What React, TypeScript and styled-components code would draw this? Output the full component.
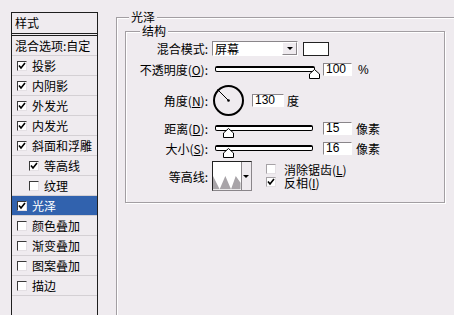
import styled, { createGlobalStyle } from 'styled-components'

const GlobalStyle = createGlobalStyle`
  html, body {
    margin: 0;
    background: #efebef;
    overflow: hidden;
  }
  body {
    font-family: "Noto Sans CJK SC", "Noto Sans", sans-serif;
    font-size: 12px;
    color: #000;
  }
`

const Page = styled.div`
  display: flex;
  width: 454px;
  height: 315px;
  box-sizing: border-box;
  padding: 12px 0 0 11px;
  overflow: hidden;
`

const ListBox = styled.div`
  width: 87px;
  height: 330px;
  flex-shrink: 0;
  box-sizing: border-box;
  border: 1px solid #1e1e1e;
`

const ListHeader = styled.div`
  height: 20px;
  line-height: 20px;
  padding-left: 3px;
  border-bottom: 3px double #1e1e1e;
`

const ListItem = styled.div<{ $indent?: number; $selected?: boolean }>`
  height: 20px;
  box-sizing: border-box;
  display: flex;
  align-items: center;
  gap: 5px;
  padding-left: ${p => p.$indent ?? 5}px;
  border-bottom: 1px solid #d4d0d4;
  background: ${p => (p.$selected ? '#3162ae' : 'transparent')};
  color: ${p => (p.$selected ? '#fff' : '#000')};
  white-space: nowrap;
`

const Box = styled.span<{ $light?: boolean }>`
  width: 10px;
  height: 10px;
  flex-shrink: 0;
  box-sizing: border-box;
  display: inline-flex;
  align-items: center;
  justify-content: center;
  background: #fff;
  border-top: 1px solid ${p => (p.$light ? '#a6a2a6' : '#3a3a3a')};
  border-left: 1px solid ${p => (p.$light ? '#a6a2a6' : '#3a3a3a')};
  border-right: 1px solid #e4e0e4;
  border-bottom: 1px solid #e4e0e4;
`

const Group = styled.fieldset<{ $w: number; $h: number; $ml: number; $mt: number }>`
  margin: ${p => p.$mt}px 0 0 ${p => p.$ml}px;
  padding: 0;
  width: ${p => p.$w}px;
  height: ${p => p.$h}px;
  box-sizing: border-box;
  flex-shrink: 0;
  min-inline-size: 0;
  border: 1px solid #a29ea2;
  box-shadow: 1px 1px 0 #fff, inset 1px 1px 0 #fff;
`

const Legend = styled.legend<{ $ml: number }>`
  margin-left: ${p => p.$ml}px;
  padding: 0 2px;
  line-height: 12px;
  background: #efebef;
`

const Inner = styled.div`
  display: flex;
  flex-direction: column;
  padding: 4px 0 0 0;
`

const Row = styled.div<{ $h: number; $mt?: number }>`
  display: flex;
  align-items: center;
  height: ${p => p.$h}px;
  margin-top: ${p => p.$mt ?? 0}px;
`

const Label = styled.div`
  width: 82px;
  margin-right: 4px;
  text-align: right;
  white-space: nowrap;
  flex-shrink: 0;
  u {
    text-decoration: underline;
  }
`

const Select = styled.div`
  width: 86px;
  height: 15px;
  box-sizing: border-box;
  display: flex;
  align-items: center;
  background: #fff;
  border-top: 1px solid #8a868a;
  border-left: 1px solid #8a868a;
  border-right: 1px solid #fff;
  border-bottom: 1px solid #fff;
  padding-left: 2px;
`

const DropButton = styled.span`
  margin-left: auto;
  width: 15px;
  height: 13px;
  box-sizing: border-box;
  display: flex;
  align-items: center;
  justify-content: center;
  background: #efebef;
  border: 1px solid;
  border-color: #fff #8a868a #8a868a #fff;
`

const Arrow = styled.span`
  width: 0;
  height: 0;
  border-left: 3px solid transparent;
  border-right: 3px solid transparent;
  border-top: 3px solid #000;
`

const ColorSwatch = styled.div`
  width: 26px;
  height: 14px;
  box-sizing: border-box;
  margin-left: 5px;
  background: #fff;
  border: 1px solid #222;
`

const Track = styled.div<{ $w: number }>`
  position: relative;
  width: ${p => p.$w}px;
  height: 6px;
  margin-left: 3px;
  box-sizing: border-box;
  background: #fff;
  border: 1px solid #000;
  border-top-width: 2px;
  border-radius: 2px;
  align-self: center;
  margin-top: -2px;
`

const Thumb = styled.svg`
  position: absolute;
  top: 1px;
  width: 11px;
  height: 10px;
  margin-left: -5px;
`

const NumInput = styled.div<{ $w: number; $ml: number }>`
  width: ${p => p.$w}px;
  height: 13px;
  box-sizing: border-box;
  margin-left: ${p => p.$ml}px;
  background: #fff;
  border-top: 1px solid #8a868a;
  border-left: 1px solid #8a868a;
  border-right: 1px solid #fff;
  border-bottom: 1px solid #fff;
  font-family: "Liberation Sans", Arial, sans-serif;
  font-size: 12px;
  line-height: 11px;
  padding-left: 2px;
`

const Unit = styled.span<{ $ml: number; $latin?: boolean }>`
  margin-left: ${p => p.$ml}px;
  font-family: ${p => (p.$latin ? '"Liberation Sans", Arial, sans-serif' : 'inherit')};
  white-space: nowrap;
`

const Contour = styled.div`
  width: 40px;
  height: 30px;
  box-sizing: border-box;
  display: flex;
  border-top: 1px solid #222;
  border-left: 1px solid #222;
  border-right: 1px solid #8a868a;
  border-bottom: 1px solid #8a868a;
  background: #fff;
`

const ContourDrop = styled.span`
  margin-left: auto;
  width: 10px;
  display: flex;
  align-items: center;
  justify-content: center;
  background: #efebef;
  border-left: 1px solid #8a868a;
`

const Options = styled.div`
  display: flex;
  flex-direction: column;
  margin-left: 14px;
  margin-top: -1px;
`

const Option = styled.label`
  display: flex;
  align-items: center;
  gap: 8px;
  height: 13px;
  line-height: 13px;
  white-space: nowrap;
`

const Check = () => (
  <svg width="8" height="8" viewBox="0 0 8 8">
    <polyline points="1,3.5 3,6 7,1" fill="none" stroke="#000" strokeWidth="1.6" />
  </svg>
)

const Slider = ({ width, value }: { width: number; value: number }) => (
  <Track $w={width}>
    <Thumb viewBox="0 0 11 10" style={{ left: `${value * 100}%` }}>
      <polygon points="5.5,0.5 10.5,5 10.5,9.5 0.5,9.5 0.5,5" fill="#fff" stroke="#000" />
    </Thumb>
  </Track>
)

const items = [
  { name: '投影', checked: true },
  { name: '内阴影', checked: true },
  { name: '外发光', checked: true },
  { name: '内发光', checked: true },
  { name: '斜面和浮雕', checked: true },
  { name: '等高线', checked: true, sub: true },
  { name: '纹理', checked: false, sub: true },
  { name: '光泽', checked: true, selected: true },
  { name: '颜色叠加', checked: false },
  { name: '渐变叠加', checked: false },
  { name: '图案叠加', checked: false },
  { name: '描边', checked: false },
]

export default function App() {
  return (
    <>
      <GlobalStyle />
      <Page>
        <ListBox>
          <ListHeader>样式</ListHeader>
          <ListItem $indent={3}>混合选项:自定</ListItem>
          {items.map(it => (
            <ListItem key={it.name} $indent={it.sub ? 17 : 5} $selected={it.selected}>
              <Box>{it.checked && <Check />}</Box>
              {it.name}
            </ListItem>
          ))}
        </ListBox>

        <Group $w={360} $h={330} $ml={18} $mt={-1}>
          <Legend $ml={12}>光泽</Legend>
          <Group $w={320} $h={178} $ml={8} $mt={2}>
            <Legend $ml={14}>结构</Legend>
            <Inner>
              <Row $h={15}>
                <Label>混合模式:</Label>
                <Select>
                  屏幕
                  <DropButton>
                    <Arrow />
                  </DropButton>
                </Select>
                <ColorSwatch />
              </Row>

              <Row $h={13} $mt={7}>
                <Label>
                  不透明度(<u>O</u>):
                </Label>
                <Slider width={100} value={1} />
                <NumInput $w={29} $ml={8}>100</NumInput>
                <Unit $ml={6} $latin>%</Unit>
              </Row>

              <Row $h={31} $mt={9}>
                <Label>
                  角度(<u>N</u>):
                </Label>
                <svg width="33" height="31" viewBox="0 0 33 31">
                  <circle cx="16.5" cy="15.5" r="14.5" fill="none" stroke="#000" strokeWidth="2" />
                  <line x1="16.5" y1="15.5" x2="5.5" y2="4.5" stroke="#000" strokeWidth="1" />
                  <circle cx="16.5" cy="15.5" r="1.3" fill="#000" />
                </svg>
                <NumInput $w={32} $ml={7}>130</NumInput>
                <Unit $ml={3}>度</Unit>
              </Row>

              <Row $h={13} $mt={6}>
                <Label>
                  距离(<u>D</u>):
                </Label>
                <Slider width={98} value={0.13} />
                <NumInput $w={29} $ml={10}>15</NumInput>
                <Unit $ml={4}>像素</Unit>
              </Row>

              <Row $h={13} $mt={7}>
                <Label>
                  大小(<u>S</u>):
                </Label>
                <Slider width={98} value={0.12} />
                <NumInput $w={29} $ml={10}>16</NumInput>
                <Unit $ml={4}>像素</Unit>
              </Row>

              <Row $h={30} $mt={6}>
                <Label>等高线:</Label>
                <Contour>
                  <svg width="29" height="28" viewBox="0 0 29 28">
                    <polygon points="0,28 0,14 7,28 13,14 19,28 24,14 29,21 29,28" fill="#a8a4a8" />
                  </svg>
                  <ContourDrop>
                    <Arrow />
                  </ContourDrop>
                </Contour>
                <Options>
                  <Option>
                    <Box $light />
                    <span>
                      消除锯齿(<u>L</u>)
                    </span>
                  </Option>
                  <Option>
                    <Box $light>
                      <Check />
                    </Box>
                    <span>
                      反相(<u>I</u>)
                    </span>
                  </Option>
                </Options>
              </Row>
            </Inner>
          </Group>
        </Group>
      </Page>
    </>
  )
}
